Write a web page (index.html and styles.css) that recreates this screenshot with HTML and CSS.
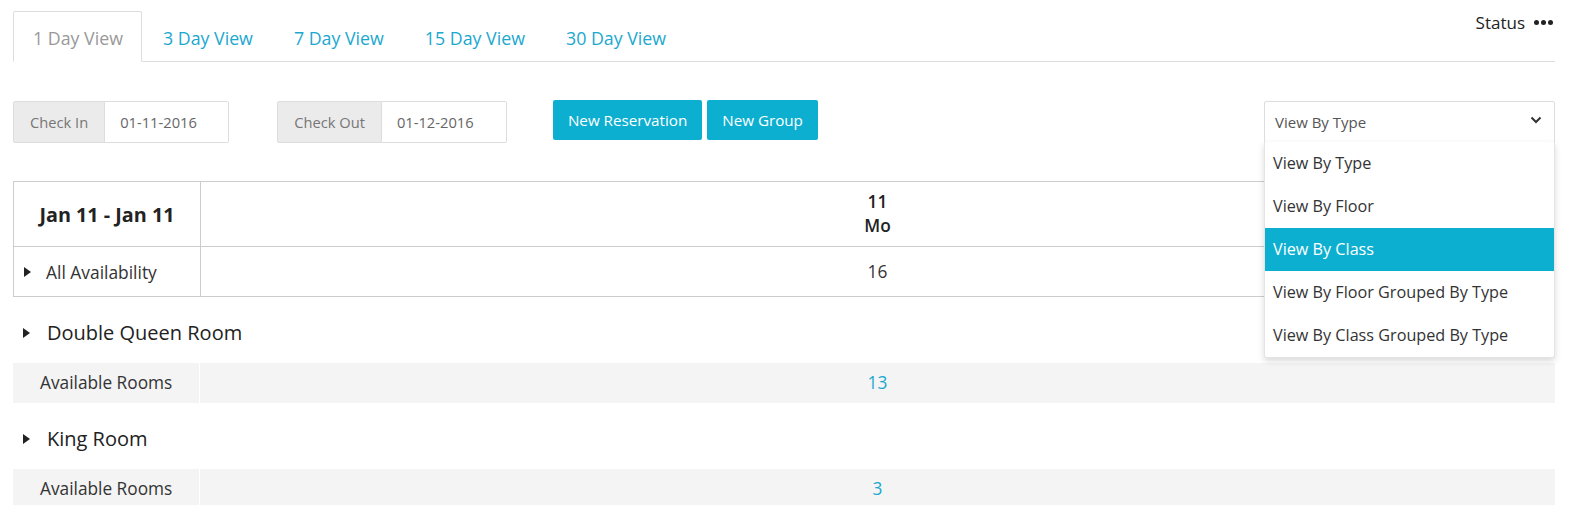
FILE: index.html
```html
<!DOCTYPE html>
<html>
<head>
<meta charset="utf-8">
<link rel="stylesheet" href="styles.css">
</head>
<body>
<div class="page">
  <div class="header">
    <ul class="tabs">
      <li class="tab active">1 Day View</li>
      <li class="tab">3 Day View</li>
      <li class="tab">7 Day View</li>
      <li class="tab">15 Day View</li>
      <li class="tab">30 Day View</li>
    </ul>
    <div class="status">Status <span class="dots"><i></i><i></i><i></i></span></div>
  </div>

  <div class="toolbar">
    <div class="group">
      <span class="addon">Check In</span>
      <span class="field">01-11-2016</span>
    </div>
    <div class="group group2">
      <span class="addon">Check Out</span>
      <span class="field">01-12-2016</span>
    </div>
    <button class="btn btn-first">New Reservation</button>
    <button class="btn">New Group</button>
    <div class="select-wrap">
      <div class="select">
        <span>View By Type</span>
        <svg class="chev" width="12" height="8" viewBox="0 0 12 8"><path d="M1.5 1.5 L6 6 L10.5 1.5" fill="none" stroke="#333" stroke-width="2"/></svg>
      </div>
      <ul class="menu">
        <li>View By Type</li>
        <li>View By Floor</li>
        <li class="sel">View By Class</li>
        <li>View By Floor Grouped By Type</li>
        <li>View By Class Grouped By Type</li>
      </ul>
    </div>
  </div>

  <div class="grid">
    <div class="row head">
      <div class="c1 range">Jan 11 - Jan 11</div>
      <div class="c2 day">11<br>Mo</div>
    </div>
    <div class="row avail">
      <div class="c1"><span class="tri"></span>All Availability</div>
      <div class="c2">16</div>
    </div>
  </div>

  <div class="section"><span class="tri"></span>Double Queen Room</div>
  <div class="rooms">
    <div class="c1">Available Rooms</div>
    <div class="c2 num">13</div>
  </div>
  <div class="section"><span class="tri"></span>King Room</div>
  <div class="rooms">
    <div class="c1">Available Rooms</div>
    <div class="c2 num">3</div>
  </div>
</div>
</body>
</html>
```

FILE: styles.css
```css
* { box-sizing: border-box; }
body {
  margin: 0;
  font-family: "Open Sans", "Noto Sans", sans-serif;
  color: #333;
  background: #fff;
}
.page {
  padding: 11px 16px 0 13px;
}
.header {
  display: flex;
  align-items: flex-start;
  border-bottom: 1px solid #ddd;
}
.tabs {
  list-style: none;
  margin: 0;
  padding: 0;
  display: flex;
  flex: 1;
}
.tab {
  height: 51px;
  line-height: 52px;
  padding: 0 19px 0 20px;
  font-size: 17.8px;
  color: #1ba8cf;
  border: 1px solid transparent;
  margin-bottom: -1px;
}
.tab.active {
  color: #999;
  border-color: #ddd;
  border-bottom-color: #fff;
  background: #fff;
  padding: 0 18px 0 19px;
  border-radius: 2px 2px 0 0;
}
.status {
  font-size: 17px;
  margin-top: 0;
  display: flex;
  align-items: center;
  color: #222;
}
.dots {
  display: inline-flex;
  gap: 2px;
  margin-left: 9px;
  margin-right: 2px;
}
.dots i {
  width: 5px;
  height: 5px;
  border-radius: 50%;
  background: #222;
}
.toolbar {
  display: flex;
  align-items: flex-start;
  margin-top: 38px;
  height: 81px;
}
.group {
  display: flex;
  height: 42px;
  margin-top: 1px;
  font-size: 14.7px;
}
.group2 { margin-left: 48px; }
.addon {
  background: #ebebeb;
  border: 1px solid #ddd;
  color: #777;
  line-height: 40px;
  padding: 0 16px;
  border-radius: 2px 0 0 2px;
}
.group .field {
  border: 1px solid #ddd;
  border-left: none;
  line-height: 40px;
  padding: 0 15px;
  width: 124px;
  color: #666;
  border-radius: 0 2px 2px 0;
}
.group2 .field { width: 125px; }
.btn {
  background: #0cafd0;
  color: #fff;
  border: none;
  border-radius: 2px;
  font-family: inherit;
  font-size: 15.2px;
  height: 40px;
  padding: 0 15px;
  margin-left: 5px;
}
.btn-first { margin-left: 46px; }
.select-wrap {
  margin-left: auto;
  width: 291px;
  position: relative;
  margin-top: 1px;
}
.select {
  height: 42px;
  border: 1px solid #ddd;
  border-radius: 2px;
  display: flex;
  align-items: center;
  justify-content: space-between;
  padding: 0 12px 0 10px;
  font-size: 15px;
  color: #555;
}
.chev { margin-top: -4px; }
.menu {
  position: absolute;
  top: 41px;
  left: 0;
  right: 0;
  margin: 0;
  padding: 0;
  list-style: none;
  background: #fff;
  border: 1px solid #e4e4e4;
  border-top: none;
  box-shadow: 0 3px 6px rgba(0,0,0,0.15);
  border-radius: 0 0 3px 3px;
  z-index: 2;
}
.menu li {
  height: 43px;
  line-height: 43px;
  padding-left: 8px;
  font-size: 16.2px;
  color: #333;
}
.menu li.sel {
  background: #0cafd0;
  color: #fff;
}
.grid {
  border: 1px solid #ccc;
}
.row {
  display: flex;
}
.c1 {
  width: 187px;
  flex: none;
  border-right: 1px solid #ccc;
}
.c2 {
  flex: 1;
  text-align: center;
}
.head { height: 65px; border-bottom: 1px solid #ccc; }
.range {
  font-weight: 700;
  font-size: 19.8px;
  display: flex;
  align-items: center;
  justify-content: center;
  color: #222;
}
.day {
  font-size: 17.3px;
  font-weight: 600;
  line-height: 24px;
  padding-top: 8px;
  color: #222;
}
.avail { height: 49px; }
.avail .c1 {
  display: flex;
  align-items: center;
  font-size: 17.4px;
  padding-left: 10px;
}
.avail .c2 {
  font-size: 17.3px;
  line-height: 49px;
}
.tri {
  width: 0;
  height: 0;
  border-top: 5px solid transparent;
  border-bottom: 5px solid transparent;
  border-left: 7px solid #222;
  margin-right: 15px;
  display: inline-block;
}
.section {
  height: 66px;
  display: flex;
  align-items: center;
  padding-left: 10px;
  padding-top: 4px;
  font-size: 20px;
  color: #222;
}
.section .tri { margin-right: 17px; margin-top: 2px; }
.rooms {
  display: flex;
  background: #f4f4f4;
  height: 40px;
  align-items: stretch;
}
.rooms .c1 {
  border-right: 1px solid #fff;
  font-size: 17.3px;
  line-height: 40px;
  padding-left: 27px;
}
.rooms .c2 {
  line-height: 40px;
  font-size: 17.3px;
}
.num { color: #1ba8cf; }
```
